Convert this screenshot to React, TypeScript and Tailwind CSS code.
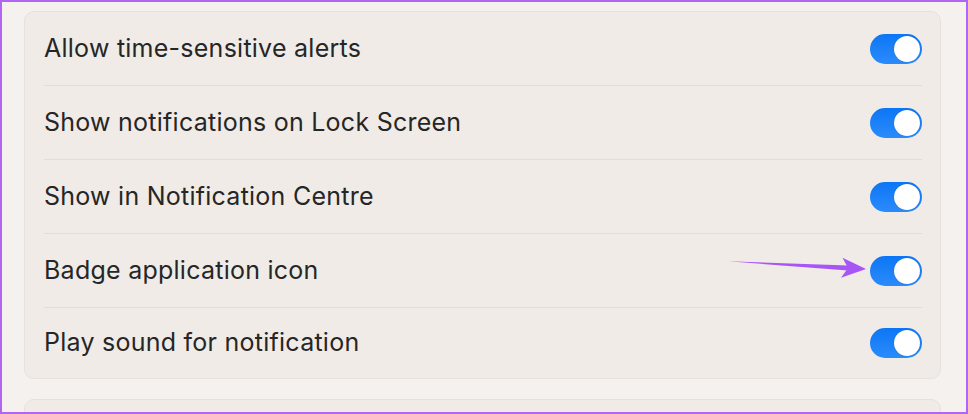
type Row = { label: string; on: boolean };

const rows: Row[] = [
  { label: 'Allow time-sensitive alerts', on: true },
  { label: 'Show notifications on Lock Screen', on: true },
  { label: 'Show in Notification Centre', on: true },
  { label: 'Badge application icon', on: true },
  { label: 'Play sound for notification', on: true },
];

function Toggle({ on }: { on: boolean }) {
  return (
    <div
      className={
        'w-[52px] h-[30px] rounded-full flex items-center px-[2px] ' +
        (on ? 'justify-end bg-gradient-to-b from-[#0a76f5] to-[#2a8bfb]' : 'justify-start bg-[#ddd8d4]')
      }
    >
      <div className="w-[26px] h-[26px] rounded-full bg-white shadow-[0_0_1px_rgba(0,0,0,0.3)]" />
    </div>
  );
}

function Arrow() {
  return (
    <svg className="absolute left-[722px] top-[250px]" width="150" height="30" viewBox="722 250 150 30">
      <path d="M726 259.3 L846 263.5 L846 268.5 Z" fill="#a855f7" />
      <path d="M864 267 L840.5 255.7 L846 266 L839 275.7 Z" fill="#a855f7" />
    </svg>
  );
}

export default function App() {
  return (
    <div
      className="relative w-[968px] h-[414px] overflow-hidden border-2 border-[#b066f2] bg-[#f5f1ee] pl-[22px] pr-[25px] pt-[9px]"
      style={{ fontFamily: 'Inter, "Noto Sans", sans-serif' }}
    >
      <div className="rounded-[10px] border border-[#e6e1dd] bg-[#f0ebe7] pl-[19px] pr-[18px]">
        {rows.map((r, i) => (
          <div key={r.label}>
            {i > 0 && <div className="h-px bg-[#e2ddd9]" />}
            <div className={'flex items-center justify-between ' + (i === rows.length - 1 ? 'h-[70px]' : 'h-[73px]')}>
              <span className="text-[25px] text-[#262626] tracking-[0.25px]">{r.label}</span>
              <Toggle on={r.on} />
            </div>
          </div>
        ))}
      </div>
      <div className="mt-[20px] h-[60px] rounded-[10px] border border-[#e6e1dd] bg-[#f0ebe7]" />
      <Arrow />
    </div>
  );
}
